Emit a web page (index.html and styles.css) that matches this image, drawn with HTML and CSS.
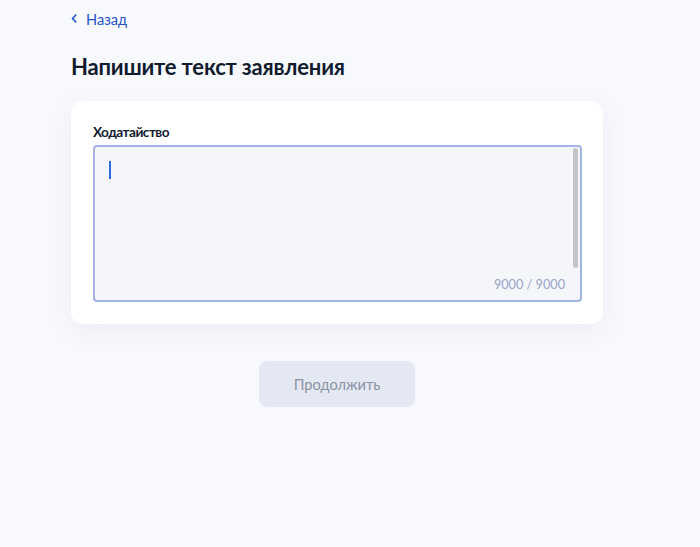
FILE: index.html
```html
<!DOCTYPE html>
<html lang="ru">
<head>
<meta charset="utf-8">
<link rel="stylesheet" href="styles.css">
</head>
<body>
<div class="page">
  <a class="back" href="#">
    <svg class="chev" width="6" height="9" viewBox="0 0 6 9"><path d="M4.8 1 L1.5 4.5 L4.8 8" fill="none" stroke="#2452c9" stroke-width="1.6" stroke-linecap="round" stroke-linejoin="round"/></svg>
    <span>Назад</span>
  </a>
  <h1 class="title">Напишите текст заявления</h1>
  <div class="card">
    <div class="label">Ходатайство</div>
    <div class="field">
      <div class="caret"></div>
      <div class="counter">9000 / 9000</div>
      <div class="scrollbar"></div>
    </div>
  </div>
  <div class="actions">
    <button class="btn" type="button">Продолжить</button>
  </div>
</div>
</body>
</html>
```

FILE: styles.css
```css
html, body {
  margin: 0;
  padding: 0;
  background: #f8f9fd;
  font-family: Lato, "Noto Sans", sans-serif;
  color: #0f1b2e;
}
.page {
  width: 532px;
  padding: 9px 0 0 71px;
}
.back {
  display: flex;
  align-items: center;
  gap: 9px;
  height: 20px;
  color: #2452c9;
  text-decoration: none;
  font-size: 14.6px;
}
.chev { display: block; margin-top: -1px; }
.title {
  margin: 24px 0 0;
  font-size: 22px;
  font-weight: 700;
  line-height: 28px;
  letter-spacing: -0.2px;
  color: #0f1b2e;
}
.card {
  margin-top: 20px;
  background: #fff;
  border-radius: 12px;
  box-shadow: 0 6px 24px rgba(60, 80, 140, 0.07);
  padding: 22px 21px 22px 22px;
}
.label {
  font-size: 13.6px;
  font-weight: 700;
  line-height: 18px;
  letter-spacing: -0.5px;
  color: #0f1b2e;
  margin-bottom: 4px;
}
.field {
  position: relative;
  border: 2px solid #a3b3e6;
  border-radius: 4px;
  background: #f5f6fa;
  display: flex;
  flex-direction: column;
  align-items: flex-start;
  padding: 14px 15px 8px 14px;
  box-sizing: border-box;
  height: 157px;
}
.caret {
  width: 2px;
  height: 18px;
  background: #2e6be0;
}
.counter {
  margin-top: auto;
  align-self: flex-end;
  font-size: 12.7px;
  line-height: 16px;
  color: #97a4c9;
}
.scrollbar {
  position: absolute;
  top: 1px;
  right: 2px;
  width: 5px;
  height: 120px;
  border-radius: 3px;
  background: #c4c4c6;
}
.actions {
  display: flex;
  justify-content: center;
  margin-top: 37px;
}
.btn {
  width: 156px;
  height: 46px;
  border: none;
  border-radius: 8px;
  background: #e4e8f2;
  color: #8a92a5;
  font-family: Lato, "Noto Sans", sans-serif;
  font-size: 14.6px;
}
```
